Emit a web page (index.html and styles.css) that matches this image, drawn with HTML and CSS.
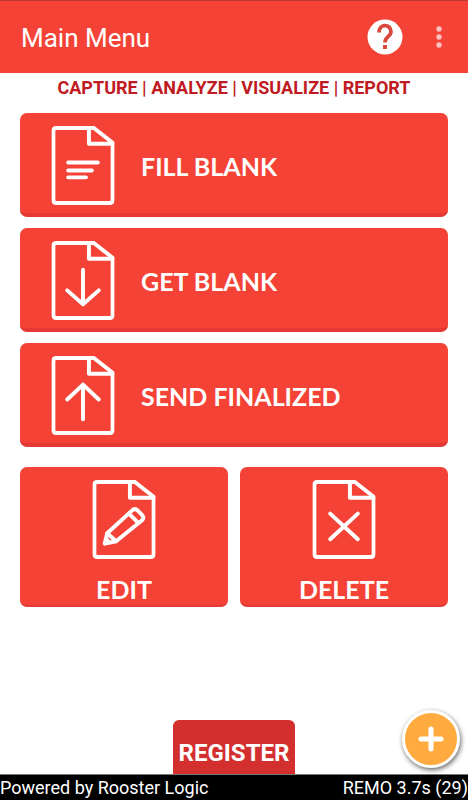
FILE: index.html
```html
<!DOCTYPE html>
<html lang="en">
<head>
    <meta charset="utf-8">
    <title>Main Menu</title>
    <meta name="viewport" content="width=device-width, initial-scale=1.0">
    <link rel="stylesheet" href="styles.css">
</head>
<body>
    <!-- page outline shared by all the menu icons -->
    <svg class="defs" aria-hidden="true">
        <symbol id="page" viewBox="0 0 64 80">
            <path d="M43 2H5Q2 2 2 5V75Q2 78 5 78H59Q62 78 62 75V17L43 2"/>
            <path d="M38 2V18H62"/>
        </symbol>
    </svg>

    <header class="toolbar">
        <h1 class="title">Main Menu</h1>
        <button class="icon-button" type="button" aria-label="Help">
            <svg width="36" height="36" viewBox="0 0 36 36">
                <circle cx="18" cy="18" r="17.5" fill="#fff"/>
                <path d="M12 13.5C12 4.500 24 4.500 24 13C24 17.500 18 17.500 18 23.500" fill="none" stroke="#d9473d" stroke-width="3.800"/>
                <rect x="16" y="26" width="4" height="4" fill="#d9473d"/>
            </svg>
        </button>
        <button class="icon-button" type="button" aria-label="More options">
            <svg width="8" height="24" viewBox="0 0 8 24" fill="#fbc4bf">
                <circle cx="4" cy="4" r="2.700"/>
                <circle cx="4" cy="12" r="2.700"/>
                <circle cx="4" cy="20" r="2.700"/>
            </svg>
        </button>
    </header>

    <main class="content">
        <p class="tagline">CAPTURE | ANALYZE | VISUALIZE | REPORT</p>

        <nav class="menu">
            <button class="card" type="button">
                <svg class="card-icon" viewBox="0 0 64 80">
                    <use href="#page"/>
                    <path d="M17 37H47M17 45H41M17 52H35"/>
                </svg>
                FILL BLANK
            </button>
            <button class="card" type="button">
                <svg class="card-icon" viewBox="0 0 64 80">
                    <use href="#page"/>
                    <path d="M32 29V64M16 50L32 64L48 50"/>
                </svg>
                GET BLANK
            </button>
            <button class="card" type="button">
                <svg class="card-icon" viewBox="0 0 64 80">
                    <use href="#page"/>
                    <path d="M32 64V29M16 44L32 29L48 44"/>
                </svg>
                SEND FINALIZED
            </button>
        </nav>

        <div class="tiles">
            <button class="card tile" type="button">
                <svg class="card-icon" viewBox="0 0 64 80">
                    <use href="#page"/>
                    <path d="M12.500 64.500L15 54L40 31Q43 28 46 31L50 35Q53 38 50 41L24 62Z"/>
                    <path d="M15 54L24 62M37 34L46 43"/>
                    <path d="M13 64L14 60L17 63Z" fill="#fff"/>
                </svg>
                EDIT
            </button>
            <button class="card tile" type="button">
                <svg class="card-icon" viewBox="0 0 64 80">
                    <use href="#page"/>
                    <path d="M18 34L46 60M46 34L18 60"/>
                </svg>
                DELETE
            </button>
        </div>

        <div class="actions">
            <button class="register" type="button">REGISTER</button>
            <button class="fab" type="button" aria-label="Add">
                <svg width="26" height="26" viewBox="0 0 26 26" stroke="#fff" stroke-width="5" stroke-linecap="round">
                    <path d="M13 3V23M3 13H23"/>
                </svg>
            </button>
        </div>
    </main>

    <footer class="footer">
        <span>Powered by Rooster Logic</span>
        <span>REMO 3.7s (29)</span>
    </footer>
</body>
</html>
```

FILE: styles.css
```css
* {
    box-sizing: border-box;
}
body {
    margin: 0;
    min-height: 100vh;
    display: flex;
    flex-direction: column;
    background: #fff;
    font-family: Roboto, sans-serif;
}
button {
    border: 0;
    padding: 0;
    font-family: inherit;
    color: #fff;
    cursor: pointer;
}
svg {
    display: block;
}
.defs {
    position: absolute;
    width: 0;
    height: 0;
}
.toolbar {
    display: flex;
    align-items: center;
    gap: 32px;
    height: 73px;
    padding: 0 25px 0 21px;
    background: #f44336;
    border-top: 1px solid #b93a32;
    color: #fff;
}
.title {
    flex: 1;
    margin: 0;
    padding-top: 2px;
    font-size: 26px;
    font-weight: 400;
    line-height: 32px;
}
.icon-button {
    background: none;
}
.content {
    flex: 1;
    display: flex;
    flex-direction: column;
    padding: 0 20px;
}
.tagline {
    margin: 5px 0 15px;
    font-size: 18px;
    font-weight: 700;
    line-height: 20px;
    text-align: center;
    color: #c01a22;
}
.menu {
    display: grid;
    gap: 11px;
}
.card {
    display: flex;
    align-items: center;
    gap: 26px;
    padding: 13px 31px 8px;
    background: #f44336;
    border-bottom: 4px solid #e53935;
    border-radius: 7px;
    font-family: Lato, sans-serif;
    font-size: 25px;
    font-weight: 700;
    line-height: 32px;
}
.card-icon {
    width: 64px;
    height: 79px;
    fill: none;
    stroke: #fff;
    stroke-width: 4;
    stroke-linecap: round;
    stroke-linejoin: round;
}
.tiles {
    display: grid;
    grid-template-columns: 1fr 1fr;
    gap: 12px;
    margin-top: 20px;
}
.tile {
    flex-direction: column;
    gap: 14px;
    padding: 13px 0 0;
    border-bottom-width: 2px;
}
.actions {
    flex: 1;
    display: flex;
    align-items: flex-end;
    justify-content: center;
}
.register {
    height: 54px;
    padding: 12px 6px 0;
    background: #d32f2f;
    border-radius: 6px 6px 0 0;
    font-size: 24px;
    font-weight: 700;
    line-height: 32px;
}
.fab {
    position: fixed;
    right: 8px;
    bottom: 32px;
    display: grid;
    place-items: center;
    width: 58px;
    height: 58px;
    background: #ffab40;
    border: 3px solid #fff;
    border-radius: 50%;
    box-shadow: 1px 2px 5px rgba(0, 0, 0, 0.6);
}
.footer {
    display: flex;
    justify-content: space-between;
    height: 26px;
    background: #000;
    border-top: 1px solid #777;
    color: #fff;
    font-size: 18px;
    line-height: 26px;
}
```
